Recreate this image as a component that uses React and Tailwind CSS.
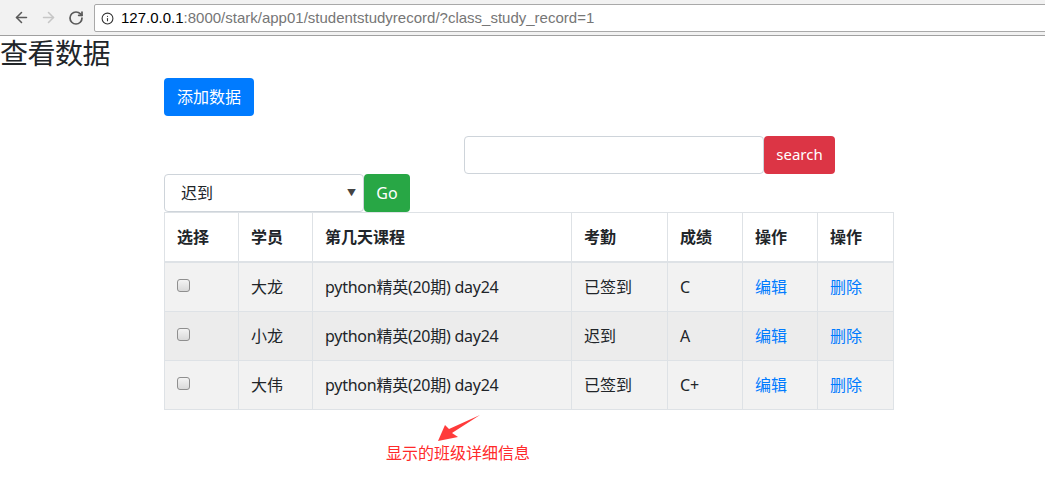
import { ArrowLeft, ArrowRight, RotateCw, Info } from 'lucide-react'

const rows = [
  { name: '大龙', course: 'python精英(20期) day24', record: '已签到', score: 'C', bg: 'bg-[#f2f2f2]' },
  { name: '小龙', course: 'python精英(20期) day24', record: '迟到', score: 'A', bg: 'bg-[#ececec]' },
  { name: '大伟', course: 'python精英(20期) day24', record: '已签到', score: 'C+', bg: 'bg-[#f2f2f2]' },
]

const cell = 'border border-[#dee2e6] px-3 py-3 align-middle leading-6'

export default function App() {
  return (
    <div className="min-h-[485px] bg-white text-[#212529] font-['Noto_Sans','Noto_Sans_CJK_SC',sans-serif] text-base">
      {/* browser toolbar */}
      <div className="h-[36px] bg-[#f2f2f2] border-b border-[#a0a0a0] flex items-start pt-[4px] overflow-hidden">
        <div className="flex items-center h-[27px] pl-[13px] gap-[10px] text-[#5a5a5a]">
          <ArrowLeft size={17} strokeWidth={2.2} />
          <ArrowRight size={17} strokeWidth={2.2} className="text-[#c6c6c6]" />
          <RotateCw size={16} strokeWidth={2.6} className="ml-[1px]" />
        </div>
        <div className="ml-[10px] h-[28px] flex-1 mr-[-20px] bg-white border border-[#a9a9a9] rounded-[2px] flex items-center pl-[6px]">
          <Info size={13} strokeWidth={2} className="text-[#333]" />
          <span className="ml-[7px] text-[15px] font-['Liberation_Sans',sans-serif]">
            <span className="text-black">127.0.0.1</span>
            <span className="text-[#767676]">:8000/stark/app01/studentstudyrecord/?class_study_record=1</span>
          </span>
        </div>
      </div>

      <h2 className="text-[28px] leading-[1.2] font-normal mb-2 font-['Noto_Sans_CJK_SC',sans-serif] tracking-[-0.5px]">查看数据</h2>

      <div className="ml-[164px] w-[730px]">
        <button className="h-[38px] px-[13px] bg-[#007bff] text-white rounded-[4px] leading-6">添加数据</button>

        <div className="mt-[20px] ml-[300px] flex">
          <input className="w-[300px] h-[38px] border border-[#ced4da] rounded-[4px] px-3 outline-none" />
          <button className="h-[38px] w-[71px] bg-[#dc3545] text-white rounded-[4px] text-[15px]">search</button>
        </div>

        <div className="flex">
          <div className="w-[200px] h-[38px] border border-[#ced4da] rounded-[4px] flex items-center pl-4 pr-[7px] justify-between">
            <span>迟到</span>
            <span className="text-[9px] text-[#444]">▼</span>
          </div>
          <button className="h-[38px] w-[46px] bg-[#28a745] text-white rounded-[4px]">Go</button>
        </div>

        <table className="w-[729px] table-fixed border-collapse">
          <colgroup>
            <col className="w-[74px]" />
            <col className="w-[74px]" />
            <col className="w-[259px]" />
            <col className="w-[96px]" />
            <col className="w-[75px]" />
            <col className="w-[75px]" />
            <col className="w-[76px]" />
          </colgroup>
          <thead>
            <tr>
              {['选择', '学员', '第几天课程', '考勤', '成绩', '操作', '操作'].map((h, i) => (
                <th key={i} className={`${cell} border-b-2 text-left font-bold`}>{h}</th>
              ))}
            </tr>
          </thead>
          <tbody>
            {rows.map((r, i) => (
              <tr key={i} className={r.bg}>
                <td className={cell}>
                  <div className="w-[13px] h-[13px] rounded-[3px] border border-[#8f8f8f] bg-gradient-to-b from-[#f4f4f4] to-[#d9d9d9] -mt-[3px]" />
                </td>
                <td className={cell}>{r.name}</td>
                <td className={`${cell} tracking-[-0.25px]`}>{r.course}</td>
                <td className={cell}>{r.record}</td>
                <td className={cell}>{r.score}</td>
                <td className={cell}><a className="text-[#007bff]">编辑</a></td>
                <td className={cell}><a className="text-[#007bff]">删除</a></td>
              </tr>
            ))}
          </tbody>
        </table>
      </div>

      {/* annotation */}
      <div className="ml-[386px] mt-[4px]">
        <svg width="46" height="30" viewBox="0 0 46 30" className="ml-[51px]">
          <polygon points="1,27 8,11 12,15 43,1 15,19 21,23" fill="#ff3b3b" />
        </svg>
        <div className="text-[16px] text-[#ff2a2a] leading-5 font-['Noto_Sans_CJK_SC',sans-serif] -mt-[2px]">显示的班级详细信息</div>
      </div>
    </div>
  )
}
